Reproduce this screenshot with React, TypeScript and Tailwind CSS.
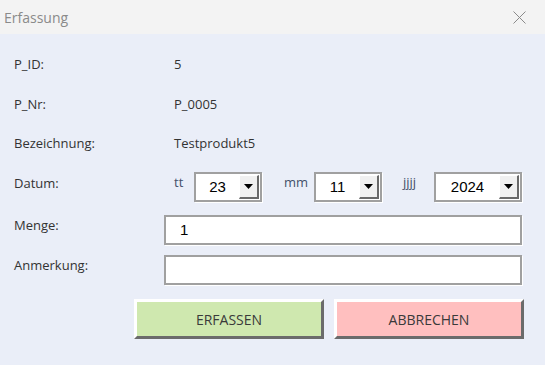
import React from 'react';

const labelFont = {fontFamily: '"Open Sans", "Noto Sans", sans-serif'};

interface ComboProps {
  value: string;
  width: string;
}

const Combo = ({value, width}: ComboProps) => (
  <div className={`flex h-[30px] ${width} border-2 border-[#a0a0a0] bg-white shadow-[1px_1px_0_#ffffff]`}>
    <div className="flex flex-1 items-center justify-center font-['Liberation_Sans',sans-serif] text-[15px] text-black">
      {value}
    </div>
    <div className="my-[1px] mr-[1px] flex w-[20px] items-center justify-center border-t border-l border-t-white border-l-white border-r-2 border-b-2 border-r-[#696969] border-b-[#696969] bg-[#f0f0f0]">
      <svg width="9" height="5" viewBox="0 0 9 5">
        <path d="M0 0h9L4.5 5z" fill="#000" />
      </svg>
    </div>
  </div>
);

const TextBox = ({value}: {value?: string}) => (
  <div className="flex h-[30px] w-[358px] items-center border-2 border-[#a0a0a0] bg-white pl-[14px] font-['Liberation_Sans',sans-serif] text-[15px] text-black shadow-[1px_1px_0_#ffffff]">
    {value}
  </div>
);

const InfoRow = ({label, value, height}: {label: string; value: string; height: string}) => (
  <div className={`flex ${height} items-center`}>
    <span className="w-[160px]">{label}</span>
    <span>{value}</span>
  </div>
);

const App = () => {
  return (
    <div className="flex h-[365px] w-[545px] flex-col bg-[#eaeef8] text-[13px] text-[#333]" style={labelFont}>
      <div className="flex h-[34px] items-center justify-between bg-[#f3f3f3] pl-[4px] pr-[19px]">
        <span className="text-[14px] text-[#8a8a8a]">Erfassung</span>
        <svg width="13" height="13" viewBox="0 0 13 13">
          <path d="M0.5 0.5l12 12M12.5 0.5l-12 12" stroke="#8a8a8a" strokeWidth="1" />
        </svg>
      </div>
      <div className="flex flex-col pl-[14px] pt-[11px]">
        <InfoRow label="P_ID:" value="5" height="h-[40px]" />
        <InfoRow label="P_Nr:" value="P_0005" height="h-[39px]" />
        <InfoRow label="Bezeichnung:" value="Testprodukt5" height="h-[40px]" />
        <div className="flex h-[46px] items-center">
          <span className="mb-[6px] w-[160px]">Datum:</span>
          <span className="mb-[8px] w-[20px] text-[#44506a]">tt</span>
          <Combo value="23" width="w-[68px]" />
          <span className="mb-[8px] ml-[22px] w-[30px] text-[#44506a]">mm</span>
          <Combo value="11" width="w-[68px]" />
          <span className="mb-[8px] ml-[21px] w-[31px] text-[#44506a]">jjjj</span>
          <Combo value="2024" width="w-[88px]" />
        </div>
        <div className="flex h-[40px] items-center">
          <span className="mb-[8px] w-[150px]">Menge:</span>
          <TextBox value="1" />
        </div>
        <div className="flex h-[40px] items-center">
          <span className="mb-[8px] w-[150px]">Anmerkung:</span>
          <TextBox />
        </div>
        <div className="ml-[120px] mt-[9px] flex gap-[10px]">
          <button className="h-[40px] w-[190px] border-t-[3px] border-l-[3px] border-t-white border-l-white border-r-[3px] border-b-[3px] border-r-[#6b6b6b] border-b-[#6b6b6b] bg-[#cfe8af] text-[14px] text-[#3a3a3a]">
            ERFASSEN
          </button>
          <button className="h-[40px] w-[190px] border-t-[3px] border-l-[3px] border-t-white border-l-white border-r-[3px] border-b-[3px] border-r-[#6b6b6b] border-b-[#6b6b6b] bg-[#ffbfbf] text-[14px] text-[#3a3a3a]">
            ABBRECHEN
          </button>
        </div>
      </div>
    </div>
  );
};

export default App;
